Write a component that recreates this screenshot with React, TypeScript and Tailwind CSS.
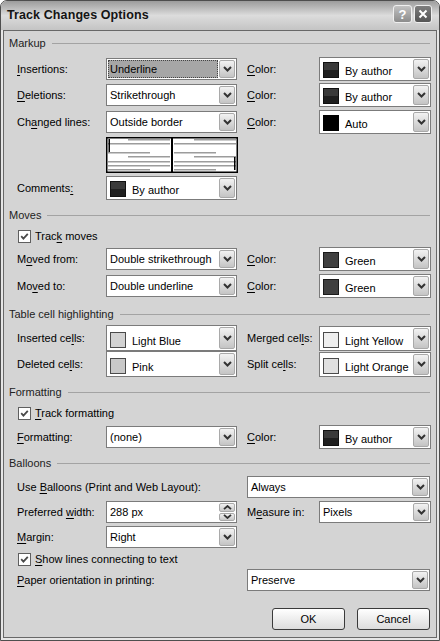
import React from "react";

function Mn({ t, i }: { t: string; i: number }) {
  return (
    <span className="whitespace-nowrap">
      {t.slice(0, i)}
      <span className="underline underline-offset-[2px] decoration-[1px]">{t[i]}</span>
      {t.slice(i + 1)}
    </span>
  );
}

function DropBtn() {
  return (
    <div className="w-[16px] my-[1px] mr-[1px] rounded-[2px] border border-[#a9a9a9] bg-linear-to-b from-[#f2f2f2] to-[#c4c4c4] flex items-center justify-center shrink-0">
      <svg width="9" height="6" viewBox="0 0 9 6">
        <path d="M1 1L4.5 4.5L8 1" fill="none" stroke="#333" strokeWidth="2" />
      </svg>
    </div>
  );
}

function Combo({
  w,
  h = "h-[22px]",
  value,
  selected,
}: {
  w: string;
  h?: string;
  value: string;
  selected?: boolean;
}) {
  return (
    <div className={`${w} ${h} flex border border-[#7b7b7b] bg-white shrink-0`}>
      {selected ? (
        <div className="flex-1 flex p-[1px] min-w-0">
          <div className="flex-1 flex items-center pl-[2px] bg-[#a6a6a6] outline-1 outline-dotted outline-[#444] -outline-offset-1">
            {value}
          </div>
        </div>
      ) : (
        <div className="flex-1 flex items-center pl-[3px] min-w-0">{value}</div>
      )}
      <DropBtn />
    </div>
  );
}

function ColorCombo({
  w,
  h = "h-[24px]",
  swatch,
  value,
}: {
  w: string;
  h?: string;
  swatch: string;
  value: string;
}) {
  return (
    <div className={`${w} ${h} flex border border-[#7b7b7b] bg-white shrink-0`}>
      <div className="flex-1 flex items-end gap-[6px] pl-[3px] pb-[2px] min-w-0">
        <div className={`w-[16px] h-[16px] shrink-0 border ${swatch}`} />
        <span className="leading-[14px] whitespace-nowrap">{value}</span>
      </div>
      <DropBtn />
    </div>
  );
}

function Spin({ w, value }: { w: string; value: string }) {
  return (
    <div className={`${w} h-[22px] flex border border-[#7b7b7b] bg-white shrink-0`}>
      <div className="flex-1 flex items-center pl-[3px]">{value}</div>
      <div className="w-[16px] my-[1px] mr-[1px] flex flex-col gap-[1px]">
        <div className="flex-1 rounded-[2px] border border-[#a9a9a9] bg-linear-to-b from-[#f2f2f2] to-[#c8c8c8] flex items-center justify-center">
          <svg width="9" height="5" viewBox="0 0 9 5">
            <path d="M1 4.2L4.5 1L8 4.2" fill="none" stroke="#333" strokeWidth="1.8" />
          </svg>
        </div>
        <div className="flex-1 rounded-[2px] border border-[#a9a9a9] bg-linear-to-b from-[#f2f2f2] to-[#c8c8c8] flex items-center justify-center">
          <svg width="9" height="5" viewBox="0 0 9 5">
            <path d="M1 0.8L4.5 4L8 0.8" fill="none" stroke="#333" strokeWidth="1.8" />
          </svg>
        </div>
      </div>
    </div>
  );
}

function Check({ children }: { children: React.ReactNode }) {
  return (
    <div className="flex items-center gap-[4px] ml-[1px]">
      <div className="w-[13px] h-[13px] border border-[#5f5f5f] bg-white flex items-center justify-center">
        <svg width="11" height="11" viewBox="0 0 11 11">
          <path d="M2.2 5.2L4.4 7.6L8.8 2.8" fill="none" stroke="#4a4a4a" strokeWidth="1.8" />
        </svg>
      </div>
      {children}
    </div>
  );
}

function Header({ title, className }: { title: string; className: string }) {
  return (
    <div className={`flex items-center h-[14px] pl-[5px] pr-[6px] ${className}`}>
      <span className="text-[#222]">{title}</span>
      <div className="flex-1 h-px bg-[#a3a3a3] ml-[6px]" />
    </div>
  );
}

function Preview() {
  const left = [
    [22, 64, 2],
    [2, 64, 6],
    [2, 44, 15],
    [22, 64, 19],
    [2, 64, 24],
    [2, 64, 28],
    [2, 44, 32],
  ];
  return (
    <svg width="132" height="36" viewBox="0 0 132 36" className="shrink-0">
      <rect x="0.75" y="0.75" width="130.5" height="34.5" fill="#fff" stroke="#000" strokeWidth="1.5" />
      <rect x="65" y="0" width="2" height="36" fill="#000" />
      {left.map(([a, b, y], i) => (
        <rect key={"l" + i} x={a} y={y} width={b - a} height="1.5" fill="#9c9c9c" />
      ))}
      {left.map(([a, b, y], i) => (
        <rect key={"r" + i} x={a + 66} y={y} width={b - a} height="1.5" fill="#9c9c9c" />
      ))}
      <rect x="2.5" y="2" width="1.5" height="13" fill="#000" />
      <rect x="128" y="20" width="1.5" height="13" fill="#000" />
    </svg>
  );
}

export default function App() {
  return (
    <div className="w-[440px] h-[641px] font-['Liberation_Sans',Arial,sans-serif] text-[11px] text-black bg-white">
      <div className="w-full h-full flex flex-col border border-[#4e4e4e] rounded-t-[7px] bg-[#e6e6e6] overflow-hidden">
        {/* title bar */}
        <div className="h-[29px] shrink-0 flex items-center pl-[6px] pr-[7px] bg-linear-to-b from-[#9c9c9c] via-[#dcdcdc] to-[#c4c4c4]">
          <span className="flex-1 font-bold text-[12.5px] text-[#141414] tracking-[0.1px]">Track Changes Options</span>
          <div className="flex gap-[2px] -mt-[3px]">
            <div className="w-[19px] h-[18px] rounded-[3px] border border-[#efefef] bg-linear-to-b from-[#c2c2c2] to-[#8c8c8c] flex items-center justify-center text-white font-bold text-[13px] leading-none">
              ?
            </div>
            <div className="w-[18px] h-[18px] rounded-[3px] border border-[#efefef] bg-linear-to-b from-[#7e7e7e] to-[#555] flex items-center justify-center">
              <svg width="10" height="10" viewBox="0 0 10 10">
                <path d="M1.5 1.5L8.5 8.5M8.5 1.5L1.5 8.5" stroke="#fff" strokeWidth="2" />
              </svg>
            </div>
          </div>
        </div>

        {/* body */}
        <div className="flex-1 mx-[2px] mb-[2px] border border-[#686868] bg-[#d4d4d4] flex flex-col">
          <Header title="Markup" className="mt-[5px]" />

          <div className="flex items-center h-[24px] mt-[7px] pl-[13px]">
            <div className="w-[89px]"><Mn t="Insertions:" i={0} /></div>
            <Combo w="w-[131px]" value="Underline" selected />
            <div className="w-[72px] ml-[10px]"><Mn t="Color:" i={0} /></div>
            <ColorCombo w="w-[112px]" swatch="border-[#111] bg-[linear-gradient(#3a3a3a_50%,#1f1f1f_50%)]" value="By author" />
          </div>
          <div className="flex items-center h-[24px] mt-[2px] pl-[13px]">
            <div className="w-[89px]"><Mn t="Deletions:" i={0} /></div>
            <Combo w="w-[131px]" value="Strikethrough" />
            <div className="w-[72px] ml-[10px]"><Mn t="Color:" i={0} /></div>
            <ColorCombo w="w-[112px]" swatch="border-[#111] bg-[linear-gradient(#3a3a3a_50%,#1f1f1f_50%)]" value="By author" />
          </div>
          <div className="flex items-center h-[24px] mt-[3px] pl-[13px]">
            <div className="w-[89px]"><Mn t="Changed lines:" i={2} /></div>
            <Combo w="w-[131px]" value="Outside border" />
            <div className="w-[72px] ml-[10px]"><Mn t="Color:" i={0} /></div>
            <ColorCombo w="w-[112px]" swatch="border-[#000] bg-[#000]" value="Auto" />
          </div>
          <div className="flex h-[36px] mt-[3px] pl-[102px]">
            <Preview />
          </div>
          <div className="flex items-center h-[24px] mt-[3px] pl-[13px]">
            <div className="w-[89px]"><Mn t="Comments:" i={8} /></div>
            <ColorCombo w="w-[131px]" swatch="border-[#111] bg-[linear-gradient(#3a3a3a_50%,#1f1f1f_50%)]" value="By author" />
          </div>

          <Header title="Moves" className="mt-[8px]" />
          <div className="flex items-center h-[14px] mt-[7px] pl-[13px]">
            <Check><Mn t="Track moves" i={4} /></Check>
          </div>
          <div className="flex items-center h-[24px] mt-[4px] pl-[13px]">
            <div className="w-[89px]"><Mn t="Moved from:" i={1} /></div>
            <Combo w="w-[131px]" value="Double strikethrough" />
            <div className="w-[72px] ml-[10px]"><Mn t="Color:" i={0} /></div>
            <ColorCombo w="w-[112px]" swatch="border-[#1a1a1a] bg-[#404040]" value="Green" />
          </div>
          <div className="flex items-center h-[24px] mt-[3px] pl-[13px]">
            <div className="w-[89px]"><Mn t="Moved to:" i={2} /></div>
            <Combo w="w-[131px]" value="Double underline" />
            <div className="w-[72px] ml-[10px]"><Mn t="Color:" i={0} /></div>
            <ColorCombo w="w-[112px]" swatch="border-[#1a1a1a] bg-[#404040]" value="Green" />
          </div>

          <Header title="Table cell highlighting" className="mt-[9px]" />
          <div className="flex items-center h-[26px] mt-[4px] pl-[13px]">
            <div className="w-[89px]"><Mn t="Inserted cells:" i={11} /></div>
            <ColorCombo w="w-[131px]" h="h-[26px]" swatch="border-[#4a4a4a] bg-[#d2d2d2]" value="Light Blue" />
            <div className="w-[72px] ml-[10px]"><Mn t="Merged cells:" i={10} /></div>
            <ColorCombo w="w-[112px]" h="h-[25px]" swatch="border-[#4a4a4a] bg-[#eeeeee]" value="Light Yellow" />
          </div>
          <div className="flex items-center h-[26px] pl-[13px]">
            <div className="w-[89px]"><Mn t="Deleted cells:" i={10} /></div>
            <ColorCombo w="w-[131px]" h="h-[26px]" swatch="border-[#4a4a4a] bg-[#c8c8c8]" value="Pink" />
            <div className="w-[72px] ml-[10px]"><Mn t="Split cells:" i={8} /></div>
            <ColorCombo w="w-[112px]" h="h-[25px]" swatch="border-[#4a4a4a] bg-[#e0e0e0]" value="Light Orange" />
          </div>

          <Header title="Formatting" className="mt-[8px]" />
          <div className="flex items-center h-[14px] mt-[7px] pl-[13px]">
            <Check><Mn t="Track formatting" i={0} /></Check>
          </div>
          <div className="flex items-center h-[24px] mt-[5px] pl-[13px]">
            <div className="w-[89px]"><Mn t="Formatting:" i={0} /></div>
            <Combo w="w-[131px]" value="(none)" />
            <div className="w-[72px] ml-[10px]"><Mn t="Color:" i={0} /></div>
            <ColorCombo w="w-[112px]" swatch="border-[#111] bg-[linear-gradient(#3a3a3a_50%,#1f1f1f_50%)]" value="By author" />
          </div>

          <Header title="Balloons" className="mt-[7px]" />
          <div className="flex items-center h-[24px] mt-[5px] pl-[13px]">
            <div className="w-[230px]"><Mn t="Use Balloons (Print and Web Layout):" i={4} /></div>
            <Combo w="w-[183px]" value="Always" />
          </div>
          <div className="flex items-center h-[24px] mt-[1px] pl-[13px]">
            <div className="w-[89px]"><Mn t="Preferred width:" i={10} /></div>
            <Spin w="w-[131px]" value="288 px" />
            <div className="w-[72px] ml-[10px]"><Mn t="Measure in:" i={1} /></div>
            <Combo w="w-[112px]" value="Pixels" />
          </div>
          <div className="flex items-center h-[24px] mt-[1px] pl-[13px]">
            <div className="w-[89px]"><Mn t="Margin:" i={0} /></div>
            <Combo w="w-[131px]" value="Right" />
          </div>
          <div className="flex items-center h-[14px] mt-[3px] pl-[13px]">
            <Check><Mn t="Show lines connecting to text" i={0} /></Check>
          </div>
          <div className="flex items-center h-[24px] mt-[2px] pl-[13px]">
            <div className="w-[230px]"><Mn t="Paper orientation in printing:" i={0} /></div>
            <Combo w="w-[183px]" value="Preserve" />
          </div>

          <div className="flex justify-end gap-[12px] pr-[6px] mt-[16px]">
            <button className="w-[73px] h-[22px] rounded-[3px] border border-[#3a3a3a] bg-linear-to-b from-[#ffffff] to-[#dcdcdc] text-[11px]">
              OK
            </button>
            <button className="w-[73px] h-[22px] rounded-[3px] border border-[#3a3a3a] bg-linear-to-b from-[#ffffff] to-[#dcdcdc] text-[11px]">
              Cancel
            </button>
          </div>
        </div>
      </div>
    </div>
  );
}
